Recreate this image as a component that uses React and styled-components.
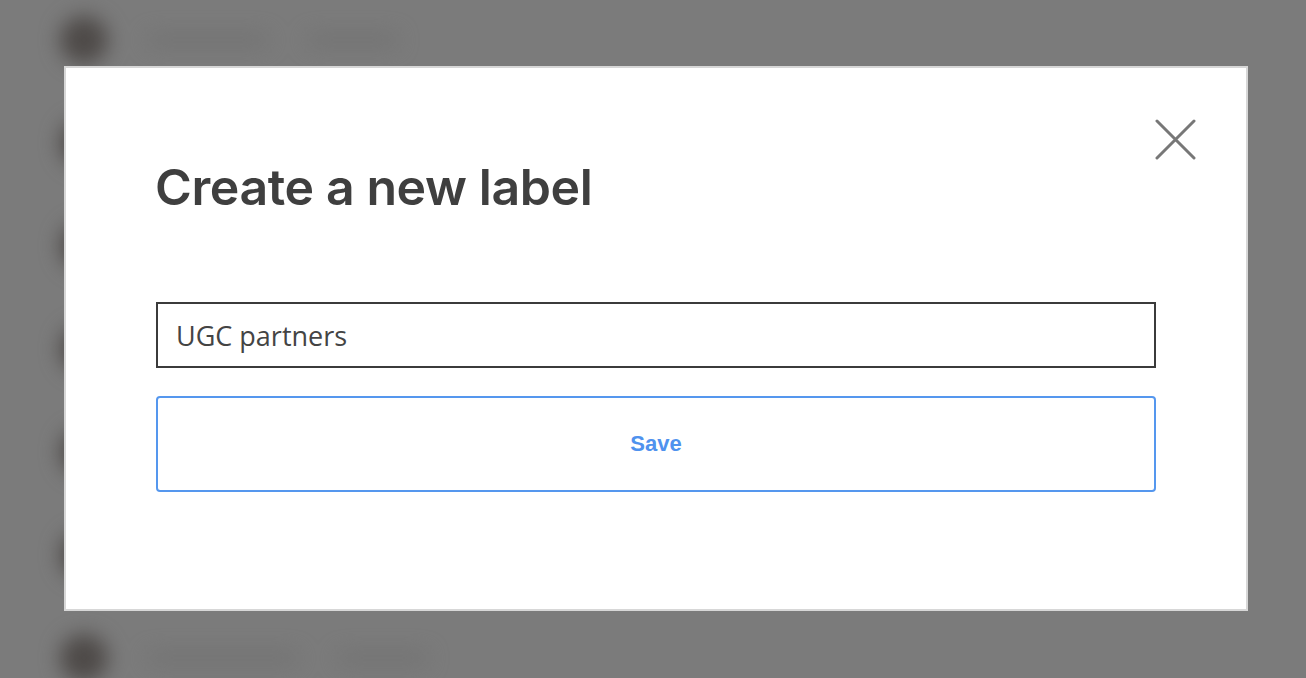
import React, {useEffect, useRef} from 'react';
import styled, {createGlobalStyle} from "styled-components";

const GlobalStyle = createGlobalStyle`
    * {
        box-sizing: border-box;
    }
    html, body {
        margin: 0;
        padding: 0;
        height: 100%;
        overflow: hidden;
        background: #7b7b7b;
    }
    #root {
        height: 100%;
    }
`;

const Page = styled.div`
    position: relative;
    height: 678px;
    overflow: hidden;
    background: #7b7b7b;
`;

const BlurredList = styled.div`
    display: flex;
    flex-direction: column;
    gap: 55px;
    padding: 16px 0 0 60px;
    filter: blur(10px);
`;

const Row = styled.div`
    display: flex;
    align-items: center;
    gap: 40px;
    height: 48px;
`;

const Avatar = styled.div`
    width: 48px;
    height: 48px;
    border-radius: 50%;
    background: #4e4a48;
`;

const Line = styled.div`
    width: ${(props) => props.w}px;
    height: 12px;
    border-radius: 6px;
    background: #727272;
`;

const Overlay = styled.div`
    position: absolute;
    inset: 0;
    display: flex;
    align-items: flex-start;
    padding: 66px 0 0 64px;
`;

const Modal = styled.div`
    position: relative;
    width: 1184px;
    height: 545px;
    background: #ffffff;
    border: 2px solid #d7d7d7;
    padding: 89px 90px 0 89px;
    display: flex;
    flex-direction: column;
`;

const CloseButton = styled.button`
    position: absolute;
    top: 50px;
    right: 50px;
    width: 42px;
    height: 42px;
    padding: 0;
    border: none;
    background: transparent;
    cursor: pointer;
`;

const Title = styled.h2`
    margin: 0;
    font-family: "Inter", "Open Sans", sans-serif;
    font-size: 50px;
    line-height: 60px;
    font-weight: 600;
    color: #3f3f3f;
    letter-spacing: -0.4px;
`;

const Form = styled.form`
    display: flex;
    flex-direction: column;
    gap: 28px;
    margin-top: 85px;
    padding-left: 1px;
`;

const Input = styled.input`
    width: 1000px;
    height: 66px;
    border: 2px solid #3b3b3b;
    border-radius: 0;
    padding: 0 18px;
    font-family: "Open Sans", "Inter", sans-serif;
    font-size: 27px;
    color: #444444;
    caret-color: #333;
    outline: none;
`;

const SaveButton = styled.button`
    width: 1000px;
    height: 96px;
    border: 2px solid #5597ee;
    border-radius: 4px;
    background: #ffffff;
    font-family: "Liberation Sans", Arial, sans-serif;
    font-weight: 700;
    font-size: 22px;
    color: #4f92ee;
    cursor: pointer;
`;

const rows = [[120, 90], [200, 60], [160, 110], [220, 80], [140, 100], [180, 70], [150, 90]];

const App = () => {
    const inputRef = useRef(null);

    useEffect(() => {
        const el = inputRef.current;
        if (el) {
            el.focus();
            el.setSelectionRange(el.value.length, el.value.length);
        }
    }, []);

    return (
        <>
            <GlobalStyle/>
            <Page>
                <BlurredList>
                    {rows.map((r, idx) => (
                        <Row key={idx}>
                            <Avatar/>
                            <Line w={r[0]}/>
                            <Line w={r[1]}/>
                        </Row>
                    ))}
                </BlurredList>
                <Overlay>
                    <Modal>
                        <CloseButton aria-label="Close">
                            <svg width="42" height="42" viewBox="0 0 42 42">
                                <path d="M3 3 L40 40 M40 3 L3 40" stroke="#777777" strokeWidth="3" strokeLinecap="round" fill="none"/>
                            </svg>
                        </CloseButton>
                        <Title>Create a new label</Title>
                        <Form onSubmit={(e) => e.preventDefault()}>
                            <Input ref={inputRef} defaultValue="UGC partners"/>
                            <SaveButton type="submit">Save</SaveButton>
                        </Form>
                    </Modal>
                </Overlay>
            </Page>
        </>
    )
}

export default App;
